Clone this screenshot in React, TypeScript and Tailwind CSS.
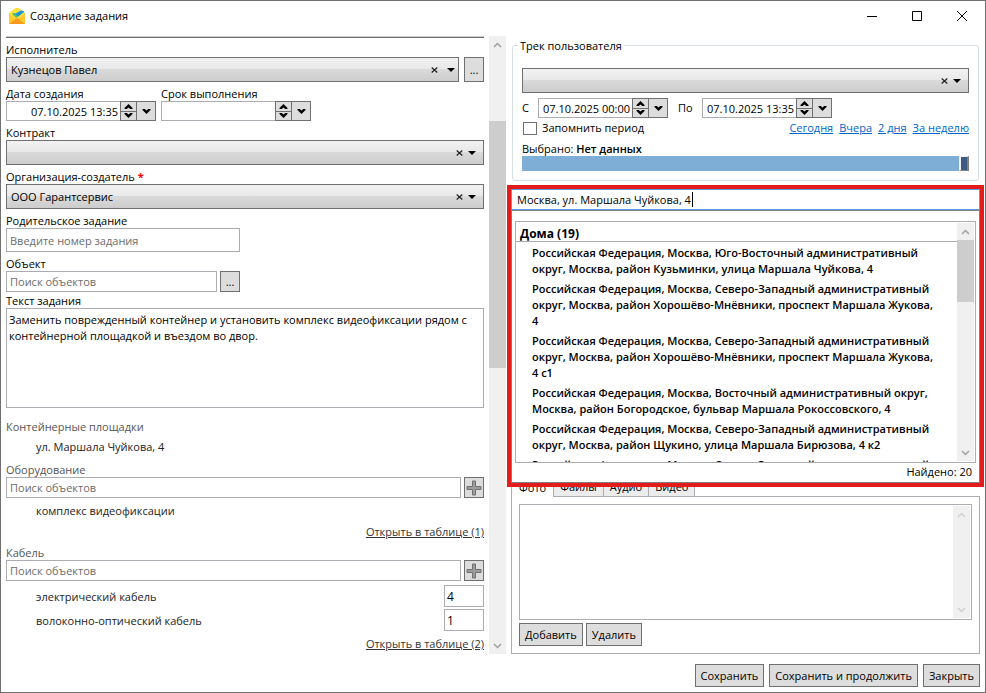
import React, { useState } from 'react';

const houses = [
    'Российская Федерация, Москва, Юго-Восточный административный округ, Москва, район Кузьминки, улица Маршала Чуйкова, 4',
    'Российская Федерация, Москва, Северо-Западный административный округ, Москва, район Хорошёво-Мнёвники, проспект Маршала Жукова, 4',
    'Российская Федерация, Москва, Северо-Западный административный округ, Москва, район Хорошёво-Мнёвники, проспект Маршала Жукова, 4 с1',
    'Российская Федерация, Москва, Восточный административный округ, Москва, район Богородское, бульвар Маршала Рокоссовского, 4',
    'Российская Федерация, Москва, Северо-Западный административный округ, Москва, район Щукино, улица Маршала Бирюзова, 4 к2',
    'Российская Федерация, Москва, Северо-Западный административный',
];

const periods = ['Сегодня', 'Вчера', '2 дня', 'За неделю'];
const tabs = ['Фото', 'Файлы', 'Аудио', 'Видео'];

const Chevron = ({ up = false, className = '' }: { up?: boolean; className?: string }) => (
    <svg viewBox="0 0 9 6" className={`w-[9px] h-[6px] ${className}`} fill="none" stroke="currentColor" strokeWidth="1.5">
        <path d={up ? 'M1 5 4.5 1.5 8 5' : 'M1 1 4.5 4.5 8 1'} />
    </svg>
);

const SmallArrow = ({ up = false }: { up?: boolean }) => (
    <svg viewBox="0 0 9 5" className="w-[9px] h-[5px]" fill="#000">
        <path d={up ? 'M4.5 0 8.5 4V5H6.2L4.5 3.4 2.8 5H.5V4z' : 'M4.5 5 8.5 1V0H6.2L4.5 1.6 2.8 0H.5V1z'} />
    </svg>
);

const Scrollbar = ({ className = '', children }: { className?: string; children?: React.ReactNode }) => (
    <div className={`w-[17px] shrink-0 bg-[#f0f0f0] flex flex-col items-center justify-between ${className}`}>
        <div className="h-[17px] shrink-0 flex items-center"><Chevron up /></div>
        <div className="flex-1 w-full flex flex-col">{children}</div>
        <div className="h-[17px] shrink-0 flex items-center"><Chevron /></div>
    </div>
);

const Button = ({ children }: { children: React.ReactNode }) => (
    <button className="h-[23px] px-[5px] border border-[#707070] bg-[#dddddd] whitespace-nowrap">{children}</button>
);

const Label = ({ htmlFor, className = '', children }: { htmlFor?: string; className?: string; children: React.ReactNode }) => (
    <label htmlFor={htmlFor} className={`block h-4 leading-[18px] ${className}`}>{children}</label>
);

const Combo = ({ id, value = '', narrow = false, label }: { id: string; value?: string; narrow?: boolean; label?: string }) => {
    const [selected, setSelected] = useState(value);
    return (
        <div className="relative flex-1">
            <select
                id={id}
                aria-label={label}
                value={selected}
                onChange={(e) => setSelected(e.target.value)}
                className="block w-full h-[25px] pl-1 appearance-none rounded-none border border-[#707070] bg-[linear-gradient(#f2f2f2,#e8e8e8_48%,#dadada_50%,#cdcdcd)]"
            >
                <option value=""></option>
                {value && <option>{value}</option>}
            </select>
            <div className={`absolute inset-y-0 flex items-center pointer-events-none ${narrow ? 'right-1 gap-2' : 'right-2 gap-1'}`}>
                <button type="button" aria-label="Очистить" className="pointer-events-auto p-px" onClick={() => setSelected('')}>
                    <svg viewBox="0 0 7 6" className="w-[7px] h-[6px]" stroke="#222" strokeWidth="1.2">
                        <path d="M.7.5 6.3 5.5M6.3.5.7 5.5" />
                    </svg>
                </button>
                <svg viewBox="0 0 8 4" className="w-2 h-1" fill="#000"><path d="M0 0h8L4 4z" /></svg>
            </div>
        </div>
    );
};

const DateField = ({ id, value = '', className }: { id: string; value?: string; className: string }) => (
    <div className={`flex h-5 ${className}`}>
        <input
            id={id}
            defaultValue={value}
            className="min-w-0 flex-1 border border-r-0 border-[#abadb3] bg-white pt-px pr-[2px] text-right"
        />
        <div className="w-[17px] flex flex-col border border-[#707070] bg-[#707070] gap-px">
            <button aria-label="Больше" className="flex-1 flex items-center justify-center bg-[#dddddd]"><SmallArrow up /></button>
            <button aria-label="Меньше" className="flex-1 flex items-center justify-center bg-[#dddddd]"><SmallArrow /></button>
        </div>
        <button aria-label="Календарь" className="w-[19px] flex items-center justify-center border border-l-0 border-[#707070] bg-[#dddddd]">
            <SmallArrow />
        </button>
    </div>
);

const AddButton = () => (
    <button aria-label="Добавить объект" className="w-5 h-[21px] shrink-0 flex items-center justify-center border border-[#707070] bg-[#dddddd]">
        <svg viewBox="0 0 16 16" className="w-4 h-4" fill="#9c9c9c" stroke="#707070">
            <path d="M6.5 1h3v5.5H15v3H9.5V15h-3V9.5H1v-3h5.5z" />
        </svg>
    </button>
);

const searchClass = 'min-w-0 flex-1 h-[21px] px-[3px] border border-[#abadb3] bg-white placeholder:text-[#6d6d6d]';

const TaskForm = () => (
    <form className="min-w-0 flex-1 flex flex-col" onSubmit={(e) => e.preventDefault()}>
        <div className="h-[2px] mb-[3px] bg-[#cdcdcd] border-b border-[#707070]" />

        <Label htmlFor="assignee">Исполнитель</Label>
        <div className="flex gap-[5px] mb-[3px]">
            <Combo id="assignee" value="Кузнецов Павел" narrow />
            <button aria-label="Выбрать исполнителя" className="w-5 border border-[#707070] bg-[#dddddd]">...</button>
        </div>

        <div className="flex gap-[5px] mb-[3px]">
            <div className="w-[150px] flex flex-col">
                <Label htmlFor="created">Дата создания</Label>
                <DateField id="created" value="07.10.2025 13:35" className="w-full" />
            </div>
            <div className="w-[150px] flex flex-col">
                <Label htmlFor="deadline">Срок выполнения</Label>
                <DateField id="deadline" className="w-full" />
            </div>
        </div>

        <Label htmlFor="contract">Контракт</Label>
        <div className="flex mb-[3px]"><Combo id="contract" /></div>

        <Label htmlFor="org">Организация-создатель <span className="font-bold text-[#ff0000]">*</span></Label>
        <div className="flex mb-[3px]"><Combo id="org" value="ООО Гарантсервис" /></div>

        <Label htmlFor="parent">Родительское задание</Label>
        <input id="parent" placeholder="Введите номер задания" className="w-[234px] h-6 px-[3px] mb-[3px] border border-[#abadb3] placeholder:text-[#6d6d6d]" />

        <Label htmlFor="object">Объект</Label>
        <div className="w-[234px] flex gap-[3px]">
            <input id="object" placeholder="Поиск объектов" className={searchClass} />
            <button aria-label="Выбрать объект" className="w-5 border border-[#707070] bg-[#dddddd]">...</button>
        </div>

        <Label htmlFor="text">Текст задания</Label>
        <textarea
            id="text"
            className="block w-full h-[100px] px-[2px] py-[3px] mb-[11px] resize-none border border-[#abadb3]"
            defaultValue="Заменить поврежденный контейнер и установить комплекс видеофиксации рядом с контейнерной площадкой и въездом во двор."
        />

        <div className="text-[#555555]">Контейнерные площадки</div>
        <div className="pl-[30px] mt-1 mb-[6px] text-[#222222]">ул. Маршала Чуйкова, 4</div>

        <Label htmlFor="equipment" className="text-[#555555]">Оборудование</Label>
        <div className="flex gap-[3px]">
            <input id="equipment" placeholder="Поиск объектов" className={searchClass} />
            <AddButton />
        </div>
        <div className="pl-[30px] my-[5px] text-[#222222]">комплекс видеофиксации</div>
        <a href="#" className="self-end mb-1 underline text-[#333333]">Открыть в таблице (1)</a>

        <Label htmlFor="cable" className="text-[#555555]">Кабель</Label>
        <div className="flex gap-[3px] mb-1">
            <input id="cable" placeholder="Поиск объектов" className={searchClass} />
            <AddButton />
        </div>
        <div className="flex flex-col gap-[2px] mb-[5px] text-[#222222]">
            <div className="flex items-center justify-between pl-[30px]">
                <Label htmlFor="qty1">электрический кабель</Label>
                <input id="qty1" defaultValue="4" className="w-10 h-[22px] px-[2px] border border-[#abadb3] text-[12px] text-black" />
            </div>
            <div className="flex items-center justify-between pl-[30px]">
                <Label htmlFor="qty2">волоконно-оптический кабель</Label>
                <input id="qty2" defaultValue="1" className="w-10 h-[22px] px-[2px] border border-[#abadb3] text-[12px] text-black" />
            </div>
        </div>
        <a href="#" className="self-end underline text-[#333333]">Открыть в таблице (2)</a>
    </form>
);

const UserTrack = () => (
    <fieldset className="relative mt-[9px] mb-1 mx-px px-[9px] pt-[22px] pb-[9px] border border-[#d5dfe5] rounded-[3px]">
        <legend className="absolute -top-2 left-[5px] px-[2px] bg-white">Трек пользователя</legend>
        <div className="flex"><Combo id="track" label="Трек пользователя" /></div>
        <div className="flex items-center mt-[5px]">
            <label htmlFor="from" className="w-4">С</label>
            <DateField id="from" value="07.10.2025 00:00" className="w-[130px]" />
            <label htmlFor="to" className="w-[34px] pl-[10px]">По</label>
            <DateField id="to" value="07.10.2025 13:35" className="w-[130px]" />
        </div>
        <div className="flex items-center justify-between mt-[2px] mb-1">
            <label className="flex items-center gap-[5px]">
                <input type="checkbox" className="appearance-none w-[14px] h-[13px] ml-px border border-[#707070] bg-white checked:bg-[#5b9bd5]" />
                Запомнить период
            </label>
            <div className="flex gap-[6px]">
                {periods.map((p) => (
                    <a key={p} href="#" className="underline text-[#0066cc]">{p}</a>
                ))}
            </div>
        </div>
        <div className="h-4 leading-[18px]">Выбрано: <span className="font-semibold">Нет данных</span></div>
        <div className="flex justify-end h-[15px] bg-[#7eadd6]">
            <div className="w-[10px] border-t border-l-2 border-b border-r-2 border-[#f0f0f0] border-r-[#808080] border-b-[#808080] bg-[#3b5c80]" />
        </div>
    </fieldset>
);

const AddressSearch = () => (
    <div className="relative flex-1 min-h-[288px]">
        <div className="absolute -inset-x-1 top-0 h-[302px] z-10 flex flex-col border-4 border-[#e31b1b] bg-white">
            <input
                aria-label="Адрес"
                defaultValue="Москва, ул. Маршала Чуйкова, 4"
                className="h-[21px] px-[5px] border border-[#569de5] outline-none bg-white"
            />
            {/* text caret */}
            <span className="absolute left-[181px] top-[3px] w-px h-[15px] bg-black" />
            <div className="flex-1 min-h-0 flex flex-col border border-[#808080] px-[3px] pt-[10px]">
                <div className="h-[242px] flex border border-[#abadb3]">
                    <div className="flex-1 min-w-0 overflow-hidden">
                        <h2 className="h-5 px-1 pt-1 border-b border-[#abadb3] text-[12px] font-bold">Дома (19)</h2>
                        <ul className="px-4 font-semibold">
                            {houses.map((house) => (
                                <li key={house} className="pt-[3px] pb-px">{house}</li>
                            ))}
                        </ul>
                    </div>
                    <Scrollbar className="my-px mr-px text-[#a0a0a0]">
                        <div className="h-[62px] bg-[#cdcdcd]" />
                    </Scrollbar>
                </div>
                <div className="pr-1 leading-[18px] text-right">Найдено: 20</div>
            </div>
        </div>
    </div>
);

const Attachments = () => {
    const [active, setActive] = useState('Фото');
    return (
        <div>
            <div className="flex items-end">
                {tabs.map((tab) => (
                    <button
                        key={tab}
                        onClick={() => setActive(tab)}
                        className={`h-5 border border-[#abadb3] -mr-px ${tab === active ? 'relative px-[7px] border-b-0 bg-white' : 'px-[6px] bg-[#ececec]'}`}
                    >
                        {tab}
                    </button>
                ))}
            </div>
            <div className="p-[7px] -mt-px border border-[#abadb3]">
                <div className="flex justify-end h-[116px] p-px border border-[#abadb3]">
                    <Scrollbar className="text-[#cfcfcf]" />
                </div>
                <div className="flex gap-[3px] mt-[3px]">
                    <Button>Добавить</Button>
                    <Button>Удалить</Button>
                </div>
            </div>
        </div>
    );
};

const App: React.FC = () => {
    return (
        <div className="min-h-screen flex flex-col px-[5px] border border-[#707070] bg-white text-[11px] leading-4 text-black font-['Open_Sans','Noto_Sans',sans-serif]">
            {/* Title bar */}
            <header className="h-[35px] flex items-center justify-between pl-[3px] pr-[13px] pb-[6px]">
                <div className="flex items-center gap-[5px]">
                    <svg viewBox="0 0 16 16" className="w-4 h-4">
                        <path d="M0 5.5 7 0h2l7 5.5V16H0z" fill="#f9b81c" />
                        <path d="M1 4 7 0h2l6 4v7H1z" fill="#ffe23f" />
                        <path d="M4.5 7.5 12 2.5l3.5 1L8 9z" fill="#1e9bd7" />
                        <path d="M3 5.5 5.5 5 9 8 6.5 9.5z" fill="#5bbf6b" />
                        <path d="M0 6l8 5 8-5v10H0z" fill="#fdc92b" />
                        <path d="M4.5 6.5 12 2.5l3 1.5-7 5.5z" fill="#1e9bd7" />
                        <path d="M3 6 5 5l4 3.5L7.5 9.5z" fill="#5bbf6b" />
                        <path d="M0 16l8-6 8 6z" fill="#f8981d" />
                    </svg>
                    <h1>Создание задания</h1>
                </div>
                <div className="flex gap-[35px]">
                    <button aria-label="Свернуть"><svg viewBox="0 0 10 10" className="w-[10px] h-[10px]"><path d="M0 5.5h10" stroke="#000" /></svg></button>
                    <button aria-label="Развернуть"><svg viewBox="0 0 10 10" className="w-[10px] h-[10px]" fill="none"><path d="M.5.5h9v9h-9z" stroke="#000" /></svg></button>
                    <button aria-label="Закрыть окно"><svg viewBox="0 0 10 10" className="w-[10px] h-[10px]"><path d="M0 0l10 10M10 0 0 10" stroke="#000" /></svg></button>
                </div>
            </header>

            <main className="flex-1 grid grid-cols-[500fr_469fr] gap-[5px]">
                <div className="flex gap-[5px] min-w-0">
                    <TaskForm />
                    <Scrollbar className="text-[#a0a0a0]">
                        <div className="h-[68px]" />
                        <div className="h-[247px] bg-[#cdcdcd]" />
                    </Scrollbar>
                </div>
                <div className="flex flex-col min-w-0">
                    <UserTrack />
                    <AddressSearch />
                    <Attachments />
                </div>
            </main>

            <footer className="flex justify-end gap-[5px] pt-[10px] pb-[5px]">
                <Button>Сохранить</Button>
                <Button>Сохранить и продолжить</Button>
                <Button>Закрыть</Button>
            </footer>
        </div>
    );
};

export default App;
